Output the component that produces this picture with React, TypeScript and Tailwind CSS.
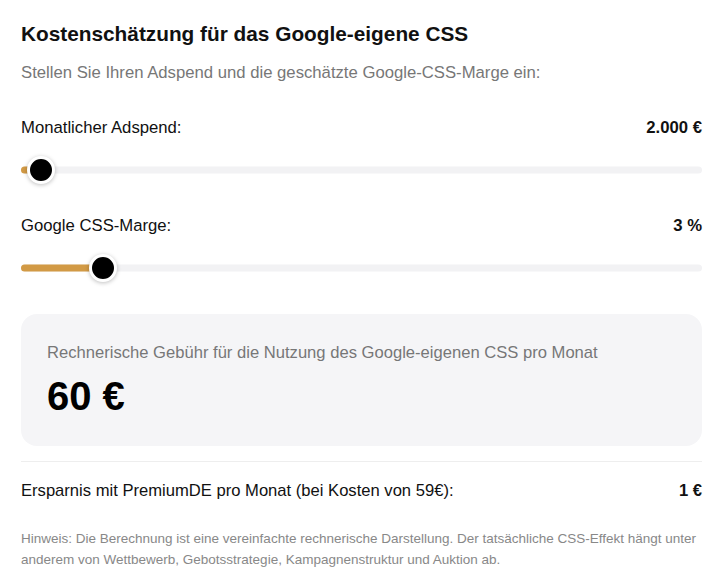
import { useState } from "react";

const fmt = (n: number) => n.toLocaleString("de-DE");

function Slider({
  value,
  min,
  max,
  step,
  onChange,
}: {
  value: number;
  min: number;
  max: number;
  step: number;
  onChange: (v: number) => void;
}) {
  const ratio = (value - min) / (max - min);
  // thumb stays inside the track, like a native range input
  const pos = `calc(13px + ${ratio} * (100% - 26px))`;
  return (
    <div className="relative h-[27px] w-full">
      <div className="absolute left-0 right-0 top-1/2 h-[7px] -translate-y-1/2 rounded-full bg-[#f2f2f4]" />
      <div
        className="absolute left-0 top-1/2 h-[7px] -translate-y-1/2 rounded-full bg-[#d29a45]"
        style={{ width: pos }}
      />
      <div
        className="absolute top-1/2 h-[28px] w-[28px] -translate-x-1/2 -translate-y-1/2 rounded-full border-[3px] border-white bg-black shadow-[0_1px_4px_rgba(0,0,0,0.25)]"
        style={{ left: pos }}
      />
      <input
        type="range"
        min={min}
        max={max}
        step={step}
        value={value}
        onChange={(e) => onChange(Number(e.target.value))}
        className="absolute inset-0 h-full w-full cursor-pointer opacity-0"
        aria-label="slider"
      />
    </div>
  );
}

export default function App() {
  const [spend, setSpend] = useState(2000);
  const [margin, setMargin] = useState(3);
  const fee = Math.round((spend * margin) / 100);
  const savings = fee - 59;

  return (
    <div className="min-h-[585px] bg-white pl-[21px] pr-[18px] pt-[20px] font-['Liberation_Sans',Arial,sans-serif] text-[#111]">
      <h2 className="text-[20.8px] font-bold leading-[28px] text-[#111]">
        Kostenschätzung für das Google-eigene CSS
      </h2>
      <p className="mt-[15px] text-[16.7px] leading-[20px] text-[#777]">
        Stellen Sie Ihren Adspend und die geschätzte Google-CSS-Marge ein:
      </p>

      <div className="mt-[35px] flex items-center justify-between text-[16.7px] leading-[20px]">
        <span>Monatlicher Adspend:</span>
        <span className="font-bold">{fmt(spend)} €</span>
      </div>
      <div className="mt-[18px]">
        <Slider value={spend} min={1000} max={100000} step={500} onChange={setSpend} />
      </div>

      <div className="mt-[33px] flex items-center justify-between text-[16.7px] leading-[20px]">
        <span>Google CSS-Marge:</span>
        <span className="font-bold">{margin} %</span>
      </div>
      <div className="mt-[18px]">
        <Slider value={margin} min={1} max={20} step={1} onChange={setMargin} />
      </div>

      <div className="mt-[33px] rounded-[16px] bg-[#f5f5f7] px-[26px] pb-[28px] pt-[29px]">
        <div className="text-[16.6px] leading-[20px] text-[#777]">
          Rechnerische Gebühr für die Nutzung des Google-eigenen CSS pro Monat
        </div>
        <div className="mt-[11px] text-[40px] font-bold leading-[44px] text-black">{fmt(fee)} €</div>
      </div>

      <div className="mt-[15px] border-t border-[#eeeeee]" />

      <div className="mt-[19px] flex items-center justify-between text-[16.6px] leading-[20px]">
        <span>Ersparnis mit PremiumDE pro Monat (bei Kosten von 59€):</span>
        <span className="font-bold">{fmt(savings)} €</span>
      </div>

      <p className="mt-[27px] text-[13.5px] leading-[21px] text-[#888]">
        Hinweis: Die Berechnung ist eine vereinfachte rechnerische Darstellung. Der tatsächliche CSS-Effekt hängt unter
        anderem von Wettbewerb, Gebotsstrategie, Kampagnenstruktur und Auktion ab.
      </p>
    </div>
  );
}
